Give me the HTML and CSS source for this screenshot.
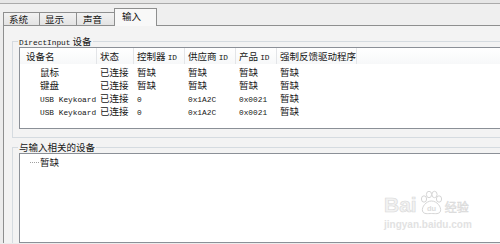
FILE: index.html
```html
<!DOCTYPE html>
<html>
<head>
    <title>DirectX 诊断工具 - 输入</title>
    <link rel="stylesheet" href="styles.css">
</head>
<body>
    <div class="topline"></div>

    <div class="tabs">
        <div class="tab">系统</div>
        <div class="tab">显示</div>
        <div class="tab">声音</div>
        <div class="tab active">输入</div>
    </div>

    <div class="panel">
        <fieldset class="group">
            <legend><span class="en">DirectInput</span> 设备</legend>
            <div class="listview">
                <div class="row head">
                    <div class="cell">设备名</div>
                    <div class="cell">状态</div>
                    <div class="cell">控制器 <span class="en">ID</span></div>
                    <div class="cell">供应商 <span class="en">ID</span></div>
                    <div class="cell">产品 <span class="en">ID</span></div>
                    <div class="cell">强制反馈驱动程序</div>
                    <div class="cell filler"></div>
                </div>
                <div class="rows">
                    <div class="row">
                        <div class="cell name">鼠标</div>
                        <div class="cell">已连接</div>
                        <div class="cell">暂缺</div>
                        <div class="cell">暂缺</div>
                        <div class="cell">暂缺</div>
                        <div class="cell">暂缺</div>
                    </div>
                    <div class="row">
                        <div class="cell name">键盘</div>
                        <div class="cell">已连接</div>
                        <div class="cell">暂缺</div>
                        <div class="cell">暂缺</div>
                        <div class="cell">暂缺</div>
                        <div class="cell">暂缺</div>
                    </div>
                    <div class="row">
                        <div class="cell name"><span class="en">USB Keykoard</span></div>
                        <div class="cell">已连接</div>
                        <div class="cell"><span class="en">0</span></div>
                        <div class="cell"><span class="en">0x1A2C</span></div>
                        <div class="cell"><span class="en">0x0021</span></div>
                        <div class="cell">暂缺</div>
                    </div>
                    <div class="row">
                        <div class="cell name"><span class="en">USB Keykoard</span></div>
                        <div class="cell">已连接</div>
                        <div class="cell"><span class="en">0</span></div>
                        <div class="cell"><span class="en">0x1A2C</span></div>
                        <div class="cell"><span class="en">0x0021</span></div>
                        <div class="cell">暂缺</div>
                    </div>
                </div>
            </div>
        </fieldset>

        <fieldset class="group second">
            <legend>与输入相关的设备</legend>
            <div class="treeview">
                <div class="tree-item"><span class="branch"></span>暂缺</div>

                <div class="watermark">
                    <div class="wm-top">
                        <span class="wm-bai">Bai</span>
                        <svg class="wm-paw" width="26" height="26" viewBox="0 0 26 26">
                            <ellipse cx="6" cy="9" rx="2.6" ry="3.2" fill="none" stroke="#d6d6d6" stroke-width="1"/>
                            <ellipse cx="11" cy="4.5" rx="2.6" ry="3.2" fill="none" stroke="#d6d6d6" stroke-width="1"/>
                            <ellipse cx="16.5" cy="4.5" rx="2.6" ry="3.2" fill="none" stroke="#d6d6d6" stroke-width="1"/>
                            <ellipse cx="21" cy="9" rx="2.6" ry="3.2" fill="none" stroke="#d6d6d6" stroke-width="1"/>
                            <path d="M13.5 11 C8 11 3.5 17 4.5 21 C5.5 24.5 10 23.5 13.5 23.5 C17 23.5 21.5 24.5 22.5 21 C23.5 17 19 11 13.5 11 Z" fill="none" stroke="#d6d6d6" stroke-width="1"/>
                            <text x="13.5" y="21" text-anchor="middle" font-family="Liberation Sans, sans-serif" font-size="7.5" font-weight="bold" fill="#dcdcdc">du</text>
                        </svg>
                        <span class="wm-jy">经验</span>
                    </div>
                    <div class="wm-url">jingyan.baidu.com</div>
                </div>
            </div>
        </fieldset>
    </div>
</body>
</html>
```

FILE: styles.css
```css
body {
    margin: 0;
    width: 500px;
    height: 244px;
    overflow: hidden;
    background: #ececec;
    font-family: "Noto Sans CJK SC", sans-serif;
    font-size: 9.5px;
    color: #161616;
}

.en {
    font-family: "Liberation Mono", monospace;
    font-size: 7.8px;
}

.topline {
    height: 3px;
    border-bottom: 1px solid #aaaaaa;
    background: #e6e6e6;
}

/* tab strip */
.tabs {
    display: flex;
    align-items: flex-end;
    height: 21px;
    padding-left: 3px;
    background: #efefef;
}

.tab {
    height: 12px;
    line-height: 12px;
    padding-left: 5px;
    border: 1px solid #8e8f8f;
    border-bottom: none;
    background: linear-gradient(#f2f2f2, #e3e3e3);
    margin-left: -1px;
}

.tab:nth-child(1) { width: 30px; margin-left: 0; }
.tab:nth-child(2) { width: 31px; }
.tab:nth-child(3) { width: 31px; padding-left: 6px; }

.tab.active {
    width: 34px;
    height: 17px;
    line-height: 15px;
    padding-left: 7px;
    margin-bottom: -1px;
    background: #f8f8f8;
    position: relative;
    z-index: 1;
}

/* page area, runs on past the right and bottom edges */
.panel {
    box-sizing: border-box;
    margin-left: 3px;
    width: 497px;
    height: 218px;
    padding: 9px 0 0 8px;
    border: 1px solid #8e8f8f;
    border-right: none;
    border-bottom: none;
    background: #f3f3f3;
}

.group {
    margin: 0;
    padding: 0 0 8px 6px;
    border: 1px solid #d5dbe0;
    border-right: none;
    min-width: 0;
}

.group legend {
    padding: 0 1px;
    margin-left: -1px;
    line-height: 12px;
    height: 12px;
}

.group.second {
    margin-top: 3px;
    padding-bottom: 0;
    border-bottom: none;
}

/* list view */
.listview {
    height: 80px;
    border: 1px solid #8b9097;
    border-right: none;
    background: #ffffff;
}

.row {
    display: grid;
    grid-template-columns: 77px 37px 51px 51px 41px 80px 1fr;
    height: 13px;
    line-height: 13px;
    white-space: nowrap;
}

.row .cell {
    padding-left: 3px;
    overflow: hidden;
}

.row .cell:first-child {
    padding-left: 6px;
}

.row .cell.name {
    padding-left: 20px;
}

.row.head {
    height: 16px;
    line-height: 16px;
    background: linear-gradient(#ffffff, #f7f8f9);
}

.row.head .cell {
    border-right: 1px solid #e3e5e8;
}

.row.head .cell.filler {
    border-right: none;
}

.rows {
    padding-top: 2px;
}

/* tree view */
.treeview {
    position: relative;
    box-sizing: border-box;
    height: 90px;
    padding-top: 2px;
    border: 1px solid #8b9097;
    border-right: none;
    background: #ffffff;
}

.tree-item {
    display: flex;
    align-items: center;
    height: 13px;
    line-height: 13px;
    padding-left: 10px;
}

.branch {
    width: 9px;
    margin-right: 1px;
    border-top: 1px dotted #a0a0a0;
}

/* page watermark */
.watermark {
    position: absolute;
    left: 364px;
    top: 36px;
    color: #e3e3e3;
    font-family: "Liberation Sans", sans-serif;
}

.wm-top {
    display: flex;
    align-items: flex-end;
    height: 26px;
}

.wm-bai {
    font-size: 21px;
    font-weight: bold;
    line-height: 22px;
    -webkit-text-stroke: 0.6px #d8d8d8;
    color: #f2f2f2;
}

.wm-paw {
    margin: 0 1px;
}

.wm-jy {
    font-family: "Noto Sans CJK SC", sans-serif;
    font-size: 12px;
    line-height: 18px;
    -webkit-text-stroke: 0.5px #d8d8d8;
    color: #f2f2f2;
}

.wm-url {
    margin-top: 3px;
    font-size: 10px;
    font-weight: bold;
    line-height: 11px;
    color: #e2e2e2;
}
```
